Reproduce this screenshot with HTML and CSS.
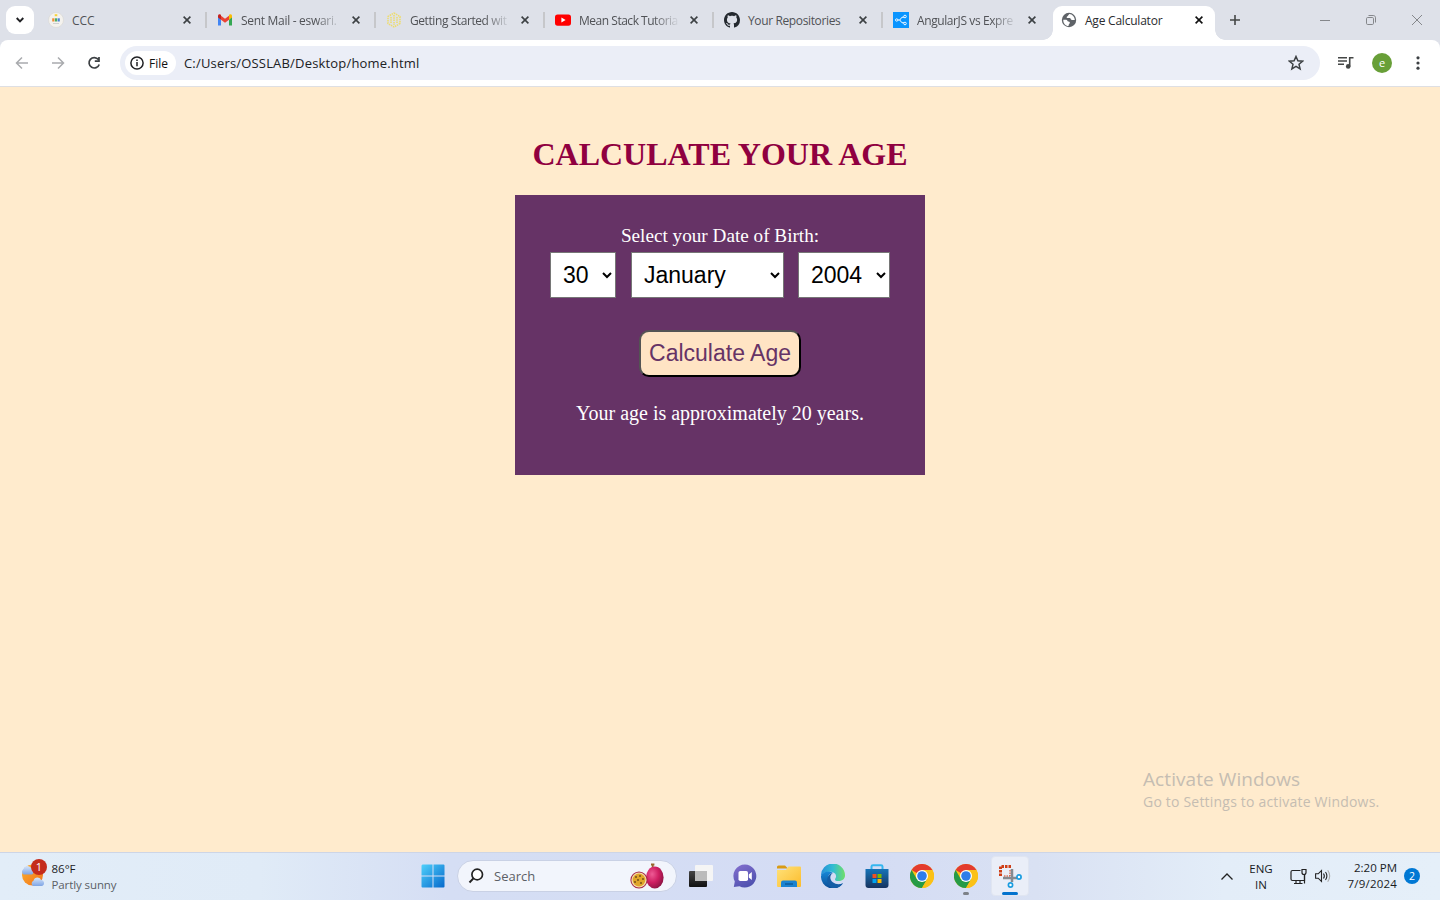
FILE: index.html
```html
<!DOCTYPE html>
<html lang="en">
<head>
<meta charset="utf-8">
<title>Age Calculator</title>
<link rel="stylesheet" href="styles.css">
</head>
<body>
<svg class="defs" width="0" height="0" aria-hidden="true">
  <defs>
    <symbol id="close" viewBox="0 0 8 8"><path d="M.6.6l6.8 6.8M7.4.6L.6 7.4" fill="none" stroke="currentColor" stroke-width="1.6"/></symbol>
    <symbol id="chrome" viewBox="0 0 48 48">
      <circle cx="24" cy="24" r="24" fill="#fbc116"/>
      <path d="M24 24L3.2 12A24 24 0 0 1 44.8 12z" fill="#e33b2e"/>
      <path d="M3.2 12A24 24 0 0 0 24 48l10.4-18L24 24 13.600 30z" fill="#269b46"/>
      <path d="M24 12h20.800A24 24 0 0 1 24 48l10.400-18z" fill="#fbc116"/>
      <circle cx="24" cy="24" r="12" fill="#fff"/><circle cx="24" cy="24" r="9.600" fill="#2f7de9"/>
    </symbol>
  </defs>
</svg>
<div class="screen">
  <header class="tabstrip">
    <button class="tab-search"><svg width="8" height="6" viewBox="0 0 8 6"><path d="M.7 1L4 4.300 7.300 1" fill="none" stroke="#202124" stroke-width="1.900"/></svg></button>
    <div class="tabs">
      <div class="tab">
        <svg class="fav" viewBox="0 0 16 16"><circle cx="8" cy="8" r="7.500" fill="#f4f2ee" stroke="#d9d7d2" stroke-width=".6"/><path d="M6.700 2.200h2.600v2H6.700z" fill="#f8d33b"/><path d="M4.200 6.300h2.200v3.200H4.200z" fill="#ef8d35"/><path d="M6.900 6.300h2.200v3.200H6.900z" fill="#4eaf62"/><path d="M9.600 6.300h2.200v3.200H9.600z" fill="#4a83d8"/><path d="M5 11.500h6" stroke="#d1d1d1"/></svg>
        <span class="title">CCC</span><svg class="x"><use href="#close"/></svg>
      </div>
      <div class="tab">
        <svg class="fav" viewBox="0 0 16 16"><path d="M1 4v9.500h3V7.500z" fill="#4285f4"/><path d="M15 4v9.500h-3V7.500z" fill="#34a853"/><path d="M4 3.800l4 3 4-3v4L8 10.800l-4-3z" fill="#ea4335"/><path d="M1 4c0-2 1.800-2.200 3-1.200v5L1 5.600z" fill="#c5221f"/><path d="M15 4c0-2-1.800-2.200-3-1.200v5l3-2.200z" fill="#fbbc04"/></svg>
        <span class="title fade t-mail">Sent Mail - eswari.</span><svg class="x"><use href="#close"/></svg>
      </div>
      <div class="tab">
        <svg class="fav" viewBox="0 0 16 16" fill="none" stroke="#eedc6a" stroke-width="1.500" stroke-dasharray="1.500 .8"><path d="M8 1l6 3.500v7L8 15l-6-3.500v-7z"/><path d="M8 3v10M5 5v6M11 5v6"/></svg>
        <span class="title fade t-start">Getting Started wit</span><svg class="x"><use href="#close"/></svg>
      </div>
      <div class="tab">
        <svg class="fav" viewBox="0 0 16 16"><rect y="2.400" width="16" height="11.300" rx="2.600" fill="#f00"/><path d="M6.400 5.600v5L10.600 8z" fill="#fff"/></svg>
        <span class="title fade t-mean">Mean Stack Tutoria</span><svg class="x"><use href="#close"/></svg>
      </div>
      <div class="tab">
        <svg class="fav" viewBox="0 0 16 16"><path fill="#24292f" d="M8 0C3.580 0 0 3.580 0 8c0 3.540 2.290 6.530 5.470 7.590.4.070.55-.17.55-.38 0-.19-.01-.82-.01-1.490-2.010.37-2.530-.49-2.690-.94-.09-.23-.48-.94-.82-1.130-.28-.15-.68-.52-.01-.53.63-.01 1.080.58 1.230.82.72 1.210 1.870.87 2.330.66.07-.52.28-.87.51-1.070-1.780-.2-3.640-.89-3.640-3.950 0-.87.31-1.590.82-2.150-.08-.2-.36-1.020.08-2.120 0 0 .67-.21 2.200.82.64-.18 1.320-.27 2-.27s1.360.09 2 .27c1.530-1.040 2.200-.82 2.200-.82.44 1.100.16 1.920.08 2.120.51.56.82 1.270.82 2.150 0 3.070-1.870 3.750-3.650 3.950.29.25.54.73.54 1.480 0 1.070-.01 1.930-.01 2.200 0 .21.15.46.55.38A8.010 8.010 0 0 0 16 8c0-4.420-3.580-8-8-8z"/></svg>
        <span class="title t-repo">Your Repositories</span><svg class="x"><use href="#close"/></svg>
      </div>
      <div class="tab">
        <svg class="fav" viewBox="0 0 16 16"><rect width="16" height="16" fill="#0a95ff"/><path d="M4.500 8h2.200L9 5.200h2M6.700 8L9 10.800h2" fill="none" stroke="#fff" stroke-width="1"/><g fill="#0a95ff" stroke="#fff" stroke-width=".9"><circle cx="3.700" cy="8" r="1.200"/><circle cx="12" cy="4.500" r="1.300"/><circle cx="12" cy="11.500" r="1.300"/></g></svg>
        <span class="title fade t-ang">AngularJS vs Expre</span><svg class="x"><use href="#close"/></svg>
      </div>
      <div class="tab active">
        <svg class="fav" viewBox="0 0 16 16"><circle cx="8" cy="8" r="7.200" fill="#5f6368"/><path d="M2.300 7.800h2.900c1.200 0 1 1.600 2.200 1.700 1.300.1 1.700.5 1.300 1.700-.3.900-1.100 1-1.200 2.900C4.600 14 2 11.500 2.300 7.800zM8.300 2.100c-1.100.8-.9 2-2.200 2.300-.9.300-.4 1.700.7 1.700h2c1 0 .8 1.800 2 1.800h3c-.2-3-2.300-5.500-5.500-5.800z" fill="#fff"/></svg>
        <span class="title t-age">Age Calculator</span><svg class="x"><use href="#close"/></svg>
      </div>
    </div>
    <svg class="newtab" width="10" height="10" viewBox="0 0 10 10"><path d="M5 0v10M0 5h10" stroke="#444746" stroke-width="1.600"/></svg>
    <div class="window-buttons">
      <svg width="10" height="10" viewBox="0 0 10 10"><path d="M0 5.500h10"/></svg>
      <svg width="10" height="10" viewBox="0 0 10 10"><rect x=".5" y="2.500" width="7" height="7" rx="1.200"/><path d="M2.500.5h4.700c1.400 0 2.300.8 2.300 2.300v4.700"/></svg>
      <svg width="10" height="10" viewBox="0 0 10 10"><path d="M0 0l10 10M10 0L0 10"/></svg>
    </div>
  </header>

  <div class="toolbar">
    <svg class="nav" viewBox="0 0 16 16"><path d="M14 8H2.500M8 2.500L2.500 8 8 13.500"/></svg>
    <svg class="nav" viewBox="0 0 16 16"><path d="M2 8h11.500M8 2.500L13.500 8 8 13.500"/></svg>
    <svg class="nav reload" viewBox="0 0 16 16"><path d="M12.400 4.600A5.200 5.200 0 1 0 13.200 9.400M13 2v4.200H8.800"/></svg>
    <div class="omnibox">
      <span class="chip"><svg width="14" height="14" viewBox="0 0 14 14"><circle cx="7" cy="7" r="6.100" fill="none" stroke="#202124" stroke-width="1.500"/><path d="M7 6v4.300M7 3.500v1.500" stroke="#202124" stroke-width="1.500"/></svg><span>File</span></span>
      <span class="url">C:/Users/OSSLAB/Desktop/home.html</span>
      <svg class="star" width="16" height="16" viewBox="0 0 16 16"><path d="M8 1.500l1.900 4.300 4.700.4-3.600 3.100 1.100 4.600L8 11.400l-4.100 2.500L5 9.300 1.400 6.200l4.700-.4z" fill="none" stroke="#3c4043" stroke-width="1.500"/></svg>
    </div>
    <svg class="media" width="16" height="14" viewBox="0 0 16 14"><path d="M0 1.800h9M0 5h9M0 8.200h6M11.700 10.500V1.800H15.500" fill="none" stroke="#444746" stroke-width="1.600"/><circle cx="10.200" cy="10.400" r="2.300" fill="#444746"/></svg>
    <span class="avatar">e</span>
    <svg class="dots" width="4" height="14" viewBox="0 0 4 14" fill="#3c4043"><circle cx="2" cy="1.800" r="1.600"/><circle cx="2" cy="7" r="1.600"/><circle cx="2" cy="12.200" r="1.600"/></svg>
  </div>

  <main class="page">
    <h1>CALCULATE YOUR AGE</h1>
    <form class="panel">
      <label>Select your Date of Birth:</label>
      <div class="selects">
        <select class="day"><option>30</option></select>
        <select class="month"><option>January</option></select>
        <select class="year"><option>2004</option></select>
      </div>
      <button type="button" class="calc">Calculate Age</button>
      <p class="result">Your age is approximately 20 years.</p>
    </form>
    <div class="watermark"><div class="wm-title">Activate Windows</div><div class="wm-text">Go to Settings to activate Windows.</div></div>
  </main>

  <footer class="taskbar">
    <div class="weather">
      <span class="weather-icon">
        <svg width="26" height="26" viewBox="0 0 26 26"><defs><linearGradient id="sun" x2="1" y2="1"><stop stop-color="#fbb12d"/><stop offset="1" stop-color="#f2711c"/></linearGradient><linearGradient id="cl" x2="0" y2="1"><stop stop-color="#d5e5fb"/><stop offset="1" stop-color="#7fa5e4"/></linearGradient></defs><circle cx="12.500" cy="13" r="10.500" fill="url(#sun)"/><path d="M3.500 12.500A3.300 3.300 0 0 1 3.500 7C4.500 3 10 3 11.500 6.500c3 .3 3 6 0 6z" fill="url(#cl)"/><path d="M13 24a3 3 0 0 1 .5-5.300c1-4 6-4 7.500-.7 4 .2 4 6 .5 6z" fill="url(#cl)"/></svg>
        <b class="badge">1</b>
      </span>
      <div class="weather-text"><div>86°F</div><div class="muted">Partly sunny</div></div>
    </div>
    <div class="apps">
      <svg class="start" width="24" height="24" viewBox="0 0 24 24"><defs><linearGradient id="win" x2="1" y2="1"><stop stop-color="#4fd0fb"/><stop offset="1" stop-color="#0669cc"/></linearGradient></defs><path d="M1.500.5H11.500v11H.500v-10zM12.500.5H22.500a1 1 0 0 1 1 1v10H12.500zM.5 12.500H11.500v11H1.500a1 1 0 0 1-1-1zM12.500 12.500h11v10a1 1 0 0 1-1 1H12.500z" fill="url(#win)"/></svg>
      <div class="search">
        <svg width="16" height="16" viewBox="0 0 16 16"><circle cx="9.200" cy="6.500" r="5.300" fill="#fff" stroke="#222" stroke-width="1.700"/><path d="M5.400 10.400L1.500 14.500" stroke="#222" stroke-width="2"/></svg>
        <span>Search</span>
        <svg class="fruit" width="34" height="27" viewBox="0 0 34 27"><defs><radialGradient id="fr" cx=".35" cy=".35" r=".75"><stop stop-color="#ee5b95"/><stop offset=".5" stop-color="#cf1e62"/><stop offset="1" stop-color="#84123f"/></radialGradient></defs><path d="M21 1.500h3.400M22.700 1v6" stroke="#97642c" stroke-width="1.800"/><ellipse cx="24.800" cy="14.500" rx="8.800" ry="11" fill="url(#fr)"/><circle cx="9" cy="17" r="8.600" fill="#a52745"/><circle cx="9" cy="17" r="7.600" fill="#f5dfb0"/><circle cx="9" cy="17" r="6.400" fill="#e0a52a"/><g fill="#765019"><circle cx="6" cy="14" r="1"/><circle cx="10" cy="13" r="1"/><circle cx="13" cy="16" r="1"/><circle cx="8" cy="17" r="1"/><circle cx="5" cy="19" r="1"/><circle cx="11" cy="20" r="1"/></g></svg>
      </div>
      <div class="app"><svg width="24" height="24" viewBox="0 0 24 24"><defs><linearGradient id="tv" x2="0" y2="1"><stop stop-color="#444"/><stop offset="1" stop-color="#111"/></linearGradient></defs><rect y="7" width="18" height="16" rx="1" fill="url(#tv)"/><rect x="6" y="1" width="18" height="16" rx="1" fill="#f5f5f5"/><path d="M6 7h12v10H6z" fill="#bbb"/></svg></div>
      <div class="app"><svg width="24" height="24" viewBox="0 0 24 24"><defs><linearGradient id="chat" x2=".5" y2="1"><stop stop-color="#8570cf"/><stop offset="1" stop-color="#5052b0"/></linearGradient></defs><path d="M12 .5a11.500 11.500 0 1 1-5.500 21.700L.8 23l1-5.500A11.500 11.500 0 0 1 12 .5z" fill="url(#chat)"/><rect x="5.500" y="7" width="9.500" height="10" rx="1.800" fill="#fff"/><path d="M15.800 10.500l3-2.500v8l-3-2.500z" fill="#fff"/></svg></div>
      <div class="app"><svg width="24" height="22" viewBox="0 0 24 22"><defs><linearGradient id="fold" x2="1" y2="1"><stop stop-color="#ffe27a"/><stop offset="1" stop-color="#fcbc2c"/></linearGradient></defs><path d="M0 2Q0 .5 1.500.5H8l3 3H0z" fill="#d99b13"/><path d="M0 5h9l2.500-3.500H23q1 0 1 1V21q0 1-1 1H1q-1 0-1-1z" fill="url(#fold)"/><path d="M4 22v-4.500q0-2 2-2h12q2 0 2 2V22z" fill="#1b83d1"/><path d="M8 19h8" stroke="#0c5591" stroke-width="1.300"/></svg></div>
      <div class="app"><svg width="24" height="24" viewBox="0 0 24 24"><defs><linearGradient id="edge1" x2="1"><stop stop-color="#268ed8"/><stop offset=".5" stop-color="#31bcd3"/><stop offset="1" stop-color="#70df68"/></linearGradient><linearGradient id="edge2" x2="0" y2="1"><stop stop-color="#1688d8"/><stop offset="1" stop-color="#0b4c94"/></linearGradient></defs><path d="M0 12A12 12 0 0 1 24 11c.2 4-3 6-6.500 6-2.700 0-4-1-3.300-2.200 2.600-4-1-7-5.200-7C4.500 7.500 1.500 9.500 0 12z" fill="url(#edge1)"/><path d="M0 12C2 7.500 8 6 12 9c-4.500 0-6 4.500-4 8 3 4.500 8.500 5.300 14 2.200A12 12 0 0 1 0 12z" fill="url(#edge2)"/><path d="M12 9.100c-3.600 2-3.500 6.500-.2 9.200 3 2.400 7 2.400 10.200.9-2.300 3.800-7 5.600-11 4.700C4 20.500 5 10 12 9.100z" fill="#145da5"/></svg></div>
      <div class="app"><svg width="24" height="24" viewBox="0 0 24 24"><defs><linearGradient id="store" x2="0" y2="1"><stop stop-color="#1674b8"/><stop offset="1" stop-color="#17335f"/></linearGradient></defs><path d="M6.500 6V2.500Q6.500 1.200 8 1.200h8q1.500 0 1.500 1.300V6" fill="none" stroke="#35b6ef" stroke-width="2"/><path d="M.5 5h23v16q0 3-3 3h-17q-3 0-3-3z" fill="url(#store)"/><path d="M7.500 10h4v4h-4z" fill="#f25022"/><path d="M12.500 10h4v4h-4z" fill="#7fba00"/><path d="M7.500 15h4v4h-4z" fill="#00a4ef"/><path d="M12.500 15h4v4h-4z" fill="#ffb900"/></svg></div>
      <div class="app"><svg width="24" height="24"><use href="#chrome"/></svg></div>
      <div class="app running"><svg width="24" height="24"><use href="#chrome"/></svg></div>
      <div class="app current"><svg width="24" height="24" viewBox="0 0 24 24"><path d="M13 2.500H2.500V13" fill="none" stroke="#cf3e16" stroke-width="3" stroke-dasharray="2.500 1"/><path d="M14 5v13M5 14H19" stroke="#858a90" stroke-width="2.500"/><path d="M12 6v6M6 12h6" stroke="#cf3e16" stroke-width="1" stroke-dasharray="1.500 1"/><g fill="#fff" stroke="#1b9de0" stroke-width="1.700"><circle cx="21" cy="13" r="2.100"/><circle cx="12.500" cy="21" r="2.100"/></g></svg></div>
    </div>
    <div class="tray">
      <svg class="up" width="12" height="7" viewBox="0 0 12 7"><path d="M.5 6.500L6 1l5.500 5.500" fill="none" stroke="#222" stroke-width="1.300"/></svg>
      <div class="lang"><div>ENG</div><div>IN</div></div>
      <svg class="net" width="17" height="17" viewBox="0 0 17 17" fill="none" stroke="#222" stroke-width="1.200"><path d="M10.500 2.500H2.500q-1.500 0-1.500 1.500v7q0 1.500 1.500 1.500h12V6.500M6 12.500V15.500M10 12.500V15.500M4 15.500h8.500"/><path d="M12 1.500h4v3q0 2-2 2t-2-2zM14.500 6.500v9"/></svg>
      <svg class="sound" width="16" height="14" viewBox="0 0 16 14" fill="none" stroke="#222" stroke-width="1.100"><path d="M.6 4.800h2.600L6.500 1.500v11L3.200 9.200H.6z"/><path d="M8.500 4.500q1.700 2.500 0 5M10.500 3q2.800 4 0 8"/><path d="M12.700 1.300q4 5.700 0 11.400" stroke="#aaa"/></svg>
      <div class="clock"><div>2:20 PM</div><div class="date">7/9/2024</div></div>
      <span class="count">2</span>
    </div>
  </footer>
</div>
</body>
</html>
```
FILE: styles.css
```css
* { box-sizing: border-box; }
body { margin: 0; font-family: "Open Sans", "Noto Sans", sans-serif; font-size: 12px; color: #202124; }
.defs { position: absolute; }
svg { flex: none; display: block; }
.screen { width: 1440px; height: 900px; display: flex; flex-direction: column; overflow: hidden; background: #dee1e9; }

.tabstrip { height: 40px; flex: none; display: flex; padding-left: 6px; }
.tab-search { width: 28px; height: 28px; margin: 6px 6px 0 0; border: 0; padding: 0; border-radius: 9px; background: #fff; display: flex; align-items: center; justify-content: center; }
.tabs { display: flex; }
.tab { width: 169px; height: 40px; padding-left: 8px; display: flex; align-items: center; position: relative; }
.tab:not(.active)::after { content: ""; position: absolute; right: 2px; top: 12px; width: 2px; height: 16px; background: #c6c7ca; }
.tab:nth-child(6)::after { display: none; }
.fav { width: 16px; height: 16px; margin-right: 8px; }
.title { width: 99px; margin-right: 11px; white-space: nowrap; color: #505256; line-height: 18px; padding-top: 1px; }
.fade { mask-image: linear-gradient(90deg, #000 75%, transparent 102%); }
.t-mail { letter-spacing: -.3px; }
.t-start { letter-spacing: -.42px; }
.t-mean { letter-spacing: -.48px; }
.t-repo { letter-spacing: -.37px; }
.t-ang { letter-spacing: -.4px; }
.t-age { letter-spacing: -.22px; }
.x { width: 8px; height: 8px; color: #3c4043; margin-left: 1px; }
.active { width: 162px; height: 34px; margin: 6px 0 0 -1px; background: #fff; border-radius: 9px 9px 0 0; padding: 0 0 6px 8px; }
.active .title { color: #2b2c2f; width: 98px; }
.active .x { color: #111; }
.active::before, .active::after { content: ""; position: absolute; bottom: 0; width: 10px; height: 10px; }
.active::before { left: -10px; background: radial-gradient(circle at 0 0, transparent 9.500px, #fff 10px); }
.active::after { right: -10px; background: radial-gradient(circle at 100% 0, transparent 9.500px, #fff 10px); }
.newtab { margin: 15px 0 0 15px; }
.window-buttons { display: flex; gap: 36px; margin: 15px 18px 0 auto; fill: none; stroke: #85878b; stroke-width: 1; }

.toolbar { height: 47px; flex: none; background: #fff; border-bottom: 1px solid #dedfe3; border-radius: 8px 8px 0 0; display: flex; align-items: center; padding-left: 14px; }
.nav { width: 16px; height: 16px; margin-right: 20px; fill: none; stroke: #a9abae; stroke-width: 1.500; }
.reload { stroke: #3c4043; stroke-width: 1.700; }
.omnibox { width: 1200px; height: 34px; margin-left: -2px; border-radius: 17px; background: #ebeef7; display: flex; align-items: center; padding: 0 16px 0 5px; }
.chip { width: 51px; height: 24px; border-radius: 12px; background: #fff; display: flex; align-items: center; padding-left: 5px; gap: 5px; font-weight: 500; color: #111; }
.url { margin-left: 8px; font-size: 13px; letter-spacing: .18px; white-space: nowrap; }
.star { margin-left: auto; }
.media { margin-left: 18px; }
.avatar { width: 20px; height: 20px; border-radius: 50%; background: #689f38; color: #fff; font-size: 11px; line-height: 19px; text-align: center; margin-left: 18px; }
.dots { margin-left: 24px; }

.page { flex: 1; background: #ffebcd; position: relative; display: flex; flex-direction: column; align-items: center; font-family: "Liberation Serif", "Times New Roman", serif; }
h1 { margin: 49px 0 0; height: 59px; font-size: 32px; line-height: 37px; color: #900040; white-space: nowrap; }
.panel { width: 410px; height: 280px; background: #636; color: #fff; display: flex; flex-direction: column; align-items: center; padding-top: 30px; }
.panel label { font-size: 19.200px; line-height: 22px; margin-bottom: 5px; white-space: nowrap; }
.selects { display: flex; gap: 15px; }
.selects select { height: 46px; margin: 0; border: 1px solid #767676; border-radius: 0; background: #fff; color: #000; font: 23px "Liberation Sans", Arial, sans-serif; padding: 8px; }
.day { width: 66px; }
.month { width: 153px; }
.selects .year { width: 92px; margin-left: -1px; }
.calc { width: 162px; height: 47px; margin-top: 32px; padding: 0; border: 2px outset #000; border-radius: 10px; background: #ffe4c4; color: #636; font: 23px "Liberation Sans", Arial, sans-serif; white-space: nowrap; }
.result { margin: 25px 0 0; font-size: 20px; line-height: 23px; white-space: nowrap; }
.watermark { position: absolute; left: 1143px; top: 679px; color: #c5bdb2; font-family: "Open Sans", sans-serif; white-space: nowrap; }
.wm-title { font-size: 19px; line-height: 26px; letter-spacing: .08px; }
.wm-text { font-size: 14px; line-height: 20px; letter-spacing: .2px; }

.taskbar { height: 48px; flex: none; border-top: 1px solid #cdd5e6; background: linear-gradient(90deg, #e2edf8 0, #e0ebf7 18%, #d5def4 31%, #d4dcf4 60%, #d9e1f3 72%, #e3edf8 85%, #e5eff9 100%); display: flex; font-size: 11.500px; }
.weather { width: 420px; display: flex; padding-left: 20px; }
.weather-icon { position: relative; width: 26px; height: 26px; margin: 9px 5.500px 0 0; }
.badge { position: absolute; left: 11px; top: -3px; width: 16px; height: 16px; border-radius: 50%; background: #c42b1c; color: #fff; font-size: 11px; line-height: 16px; text-align: center; font-weight: 400; }
.weather-text { padding-top: 8px; line-height: 16px; white-space: nowrap; }
.muted { color: #5b5f66; letter-spacing: -.1px; }
.apps { display: flex; align-items: center; height: 46px; }
.start { margin-left: .5px; }
.search { width: 220px; height: 32px; margin: 0 2px 0 12.500px; border: 1px solid #c9d1e5; border-radius: 16px; background: #f2f5fc; display: flex; align-items: center; padding-left: 10px; font-size: 13px; color: #5c5f66; }
.search span { margin-left: 10px; }
.fruit { margin: 0 12px 0 auto; }
.app { width: 44.100px; height: 46px; display: flex; align-items: center; justify-content: center; position: relative; }
.running::after { content: ""; position: absolute; bottom: 4px; width: 6px; height: 3px; border-radius: 2px; background: #7d8187; }
.current { width: 38px; height: 40px; margin-left: 3px; background: #eaeef8; border: 1px solid #e0e5f1; border-radius: 4px; }
.current::after { content: ""; position: absolute; bottom: 0; width: 16px; height: 3px; border-radius: 2px; background: #0473ce; }
.tray { height: 46px; margin-left: auto; display: flex; align-items: center; padding-right: 20px; color: #191b1e; white-space: nowrap; }
.lang { width: 28px; margin-left: 14px; padding-top: 2px; text-align: center; line-height: 16px; }
.net { margin-left: 15px; }
.sound { margin-left: 8px; }
.clock { width: 60px; margin-left: 6px; text-align: right; line-height: 16px; }
.date { letter-spacing: .2px; }
.count { width: 16px; height: 16px; margin-left: 7px; border-radius: 50%; background: #0078d4; color: #fff; text-align: center; font-size: 10.500px; line-height: 16px; }
```
